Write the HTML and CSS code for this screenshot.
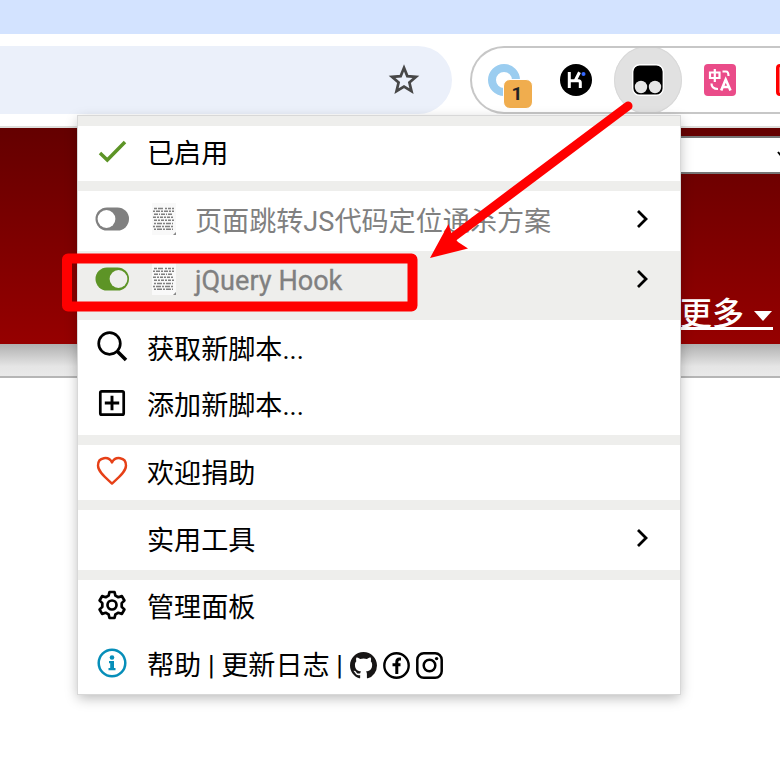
FILE: index.html
```
<!DOCTYPE html>
<html lang="zh-CN">
<head>
<meta charset="utf-8">
<title>脚本管理</title>
<link rel="stylesheet" href="styles.css">
</head>
<body>
<div class="tabs"></div>
<header class="toolbar">
  <div class="address">
    <svg width="32" height="32" viewBox="0 0 32 32"><path d="M16 3.800 19.300 12.100 28 12.800 21.400 18.500 23.500 27.100 16 22.500 8.500 27.100 10.600 18.500 4 12.800 12.700 12.100Z" fill="none" stroke="#474747" stroke-width="2.700"/></svg>
  </div>
  <div class="extensions">
    <div class="ext ext-ring"><span class="ring"></span><span class="badge">1</span></div>
    <div class="ext"><svg width="32" height="32" viewBox="0 0 32 32"><circle cx="16" cy="16" r="16"/><path d="M9.300 8v16M9.500 16.800h9q1.800 0 1.800 2V24M15.300 16.500 19.500 8.300" fill="none" stroke="#fff" stroke-width="3"/><circle cx="23.500" cy="10" r="2" fill="#3568ff"/></svg></div>
    <div class="ext ext-active"><svg width="32" height="32" viewBox="0 0 32 32"><rect x=".7" y=".7" width="30.600" height="30.600" rx="7" stroke="#fff" stroke-width="1.400"/><circle cx="9" cy="23" r="6.200" fill="#e6e6e6"/><circle cx="23" cy="23" r="6.200" fill="#e6e6e6"/></svg></div>
    <div class="ext"><svg width="32" height="32" viewBox="0 0 32 32"><rect width="32" height="32" rx="4" fill="#ea4c89"/><g fill="none" stroke="#fff" stroke-width="2.200"><path d="M6 8.500h9.500v5.500H6zM10.800 5v13M18.500 7.500h3.500q2.500 0 2.500 4.500M7.500 19.500q0 5.500 6.500 5.500"/><path d="M17.200 26.500 21.700 15.500 26.500 26.500M19 23h6" stroke-width="2.600"/></g></svg></div>
    <div class="ext"><span class="red-ext"></span></div>
  </div>
</header>
<main class="page">
  <div class="banner">
    <div class="select"><svg width="10" height="8" viewBox="0 0 10 8"><path d="M1 1l4 5 4-5" fill="none" stroke="#000" stroke-width="2"/></svg></div>
    <div class="more"><span class="more-text">更多</span><span class="caret"></span></div>
  </div>
  <div class="shade"></div>
</main>

<nav class="menu">
  <div class="row enabled">
    <span class="icon"><svg width="32" height="32" viewBox="0 0 32 32"><path d="M4 17 11.300 24 29 6" fill="none" stroke="#5d9426" stroke-width="3.500"/></svg></span>
    <span class="label">已启用</span>
  </div>
  <hr>
  <div class="row script">
    <span class="icon"><svg width="34" height="24" viewBox="0 0 34 24"><rect x=".5" y=".5" width="33.500" height="23" rx="11.500" fill="#808080"/><circle cx="11.500" cy="12" r="8.900" fill="#fff"/></svg></span>
    <svg class="sheet" width="24" height="32" viewBox="0 0 24 32"><path d="M0 0h24v32H0z" fill="#f9f9f9"/><g fill="none" stroke="#808080" stroke-width="1.500"><path d="M2 5.500h20" stroke-dasharray="3 1 5 2 2 1"/><path d="M1 8.300h21" stroke-dasharray="2 1 4 1"/><path d="M2 11.200h19" stroke-dasharray="4 1 1 1"/><path d="M1 14.200h21M2 17.300h20" stroke-dasharray="3 1 2 1"/><path d="M2 20.400h19M1 23.400h20M2 26.300h19" stroke-dasharray="2 1 5 1"/></g><path d="M24 29v3h-3z" fill="#888"/></svg>
    <span class="label">页面跳转JS代码定位通杀方案</span>
    <svg class="arrow" width="12" height="20" viewBox="0 0 12 20"><path d="M2 2l8 8-8 8" fill="none" stroke="#000" stroke-width="2.800"/></svg>
  </div>
  <div class="row script selected">
    <span class="icon"><svg width="34" height="24" viewBox="0 0 34 24"><rect x=".5" y=".5" width="33.500" height="23" rx="11.500" fill="#5d9426"/><circle cx="23.500" cy="12" r="8.900" fill="#eeeeec"/></svg></span>
    <svg class="sheet" width="24" height="32" viewBox="0 0 24 32"><path d="M0 0h24v32H0z" fill="#f9f9f9"/><g fill="none" stroke="#808080" stroke-width="1.500"><path d="M2 5.500h20" stroke-dasharray="3 1 5 2 2 1"/><path d="M1 8.300h21" stroke-dasharray="2 1 4 1"/><path d="M2 11.200h19" stroke-dasharray="4 1 1 1"/><path d="M1 14.200h21M2 17.300h20" stroke-dasharray="3 1 2 1"/><path d="M2 20.400h19M1 23.400h20M2 26.300h19" stroke-dasharray="2 1 5 1"/></g><path d="M24 29v3h-3z" fill="#888"/></svg>
    <span class="label">jQuery Hook</span>
    <svg class="arrow" width="12" height="20" viewBox="0 0 12 20"><path d="M2 2l8 8-8 8" fill="none" stroke="#000" stroke-width="2.800"/></svg>
  </div>
  <div class="row action">
    <span class="icon"><svg width="32" height="32" viewBox="0 0 32 32"><g fill="none" stroke="#000"><circle cx="13.500" cy="13.500" r="10.800" stroke-width="2.700"/><path d="M21 21l9 9" stroke-width="3.500"/></g></svg></span>
    <span class="label">获取新脚本...</span>
  </div>
  <div class="row action add">
    <span class="icon"><svg width="32" height="32" viewBox="0 0 32 32"><g fill="none" stroke="#000"><rect x="4.300" y="4.300" width="23.400" height="23.400" rx="1.500" stroke-width="2.700"/><path d="M16 8.800v14.400M8.800 16h14.400" stroke-width="2.900"/></g></svg></span>
    <span class="label">添加新脚本...</span>
  </div>
  <hr>
  <div class="row donate">
    <span class="icon"><svg width="32" height="32" viewBox="0 0 32 32"><path d="M16 28.500C10 23 2 17 2 10.500 2 1.500 13 1 16 7.500 19 1 30 1.500 30 10.500 30 17 22 23 16 28.500Z" fill="none" stroke="#e64017" stroke-width="2.400" stroke-linejoin="round"/></svg></span>
    <span class="label">欢迎捐助</span>
  </div>
  <hr>
  <div class="row tools">
    <span class="icon"></span>
    <span class="label">实用工具</span>
    <svg class="arrow" width="12" height="20" viewBox="0 0 12 20"><path d="M2 2l8 8-8 8" fill="none" stroke="#000" stroke-width="2.800"/></svg>
  </div>
  <hr>
  <div class="row settings">
    <span class="icon"><svg width="32" height="32" viewBox="0 0 32 32"><g fill="none" stroke="#000" stroke-width="2.700" stroke-linejoin="round"><path d="M13.500 3h5l.9 3.600 2.900 1.600 3.600-1.100 2.500 4.400-2.700 2.600v3.800l2.700 2.600-2.500 4.400-3.600-1.100-2.900 1.600-.9 3.600h-5l-.9-3.600-2.900-1.600-3.600 1.100-2.500-4.400 2.700-2.600v-3.800l-2.700-2.600 2.500-4.400 3.600 1.100 2.900-1.600z"/><circle cx="16" cy="16" r="4.500"/></g></svg></span>
    <span class="label">管理面板</span>
  </div>
  <div class="row help">
    <span class="icon"><svg width="32" height="32" viewBox="0 0 32 32"><circle cx="16" cy="16" r="13.300" fill="none" stroke="#068eb9" stroke-width="2.500"/><circle cx="16" cy="10.500" r="2.300" fill="#068eb9"/><path d="M13 14h5v7h1.500v2.200h-7V21h1.700v-4.800H13z" fill="#068eb9"/></svg></span>
    <span class="label">帮助 | 更新日志 |</span>
    <span class="social">
      <svg width="27" height="27" viewBox="0 0 16 16"><path fill="#171515" d="M8 0C3.580 0 0 3.580 0 8c0 3.540 2.290 6.530 5.470 7.590.4.070.55-.17.55-.38v-1.490c-2.010.37-2.530-.49-2.690-.94-.09-.23-.48-.94-.82-1.130-.28-.15-.68-.52-.01-.53.63-.01 1.080.58 1.230.82.72 1.210 1.870.87 2.330.66.07-.52.28-.87.51-1.070-1.780-.2-3.640-.89-3.640-3.950 0-.87.31-1.590.82-2.150-.08-.2-.36-1.020.08-2.120 0 0 .67-.21 2.200.82a7.400 7.400 0 0 1 4 0c1.530-1.040 2.200-.82 2.200-.82.44 1.100.16 1.920.08 2.120.51.56.82 1.270.82 2.150 0 3.070-1.870 3.750-3.650 3.950.29.25.54.73.54 1.480v2.200c0 .21.15.46.55.38A8 8 0 0 0 16 8c0-4.420-3.580-8-8-8Z"/></svg>
      <svg width="27" height="27" viewBox="0 0 27 27"><g fill="none" stroke="#000"><circle cx="13.500" cy="13.500" r="12.200" stroke-width="2.400"/><path d="M18 7h-1.500Q13.800 7 13.800 10v12M9.500 12.800h8" stroke-width="3"/></g></svg>
      <svg width="27" height="27" viewBox="0 0 27 27"><g fill="none" stroke="#000" stroke-width="2.500"><rect x="1.300" y="1.300" width="24.400" height="24.400" rx="6.500"/><circle cx="13.500" cy="13.500" r="5.800"/></g><circle cx="20.600" cy="6.600" r="1.700"/></svg>
    </span>
  </div>
</nav>

<svg class="annotation" width="780" height="782" viewBox="0 0 780 782">
  <rect x="67" y="258.500" width="345.500" height="48" rx="1" fill="none" stroke="#f00" stroke-width="10" stroke-linejoin="round"/>
  <path d="M628 106 452 238" stroke="#f00" stroke-width="9" stroke-linecap="round"/>
  <path d="M430 258 448.500 224 452 235 458 242 468 248.500Z" fill="#f00"/>
</svg>
</body>
</html>
```

FILE: styles.css
```
* { box-sizing: border-box; }
body {
  margin: 0;
  width: 780px;
  height: 782px;
  overflow: hidden;
  position: relative;
  background: #fff;
  color: #000;
  font: 27px/32px Roboto, "Noto Sans CJK SC", sans-serif;
}
svg { display: block; flex: none; }
.tabs { height: 34px; background: #d3e3ff; }
.toolbar {
  display: flex;
  gap: 18px;
  height: 94px;
  padding-top: 12px;
  border-bottom: 2px solid #dededc;
}
.address {
  flex: none;
  display: flex;
  align-items: center;
  justify-content: flex-end;
  width: 452px;
  height: 68px;
  padding-right: 32px;
  border-radius: 0 34px 34px 0;
  background: #ebf0fa;
}
.extensions {
  flex: none;
  display: flex;
  gap: 4px;
  width: 310px;
  height: 68px;
  overflow: hidden;
  border: 2px solid #c7c7c7;
  border-right: 0;
  border-radius: 34px 0 0 34px;
}
.ext {
  flex: none;
  display: flex;
  align-items: center;
  justify-content: center;
  width: 68px;
  height: 68px;
  margin-top: -2px;
}
.ext-ring { position: relative; margin-left: -2px; }
.ring { width: 32px; height: 32px; border: 8px solid #9bcdf0; border-radius: 50%; }
.badge {
  position: absolute;
  left: 33px;
  top: 33px;
  width: 30px;
  height: 30px;
  border: 1px solid #fff;
  border-radius: 7px;
  background: #f0ad4e;
  color: #202124;
  font: bold 19px/28px Roboto, sans-serif;
  text-align: center;
  padding-right: 2px;
}
.ext-active { border-radius: 50%; background: #e1e1e1; box-shadow: inset 0 0 0 1px #d8d8d8; }
.red-ext { width: 32px; height: 32px; border: 3px solid #f00; border-radius: 4px; background: #ff7777; }
.banner {
  display: flex;
  flex-direction: column;
  align-items: flex-end;
  justify-content: space-between;
  height: 216px;
  padding: 8px 0 14px;
  background: linear-gradient(#640000, #960000);
}
.select {
  display: flex;
  align-items: center;
  justify-content: flex-end;
  width: 173px;
  height: 38px;
  overflow: hidden;
  border: solid #767676;
  border-width: 2px 0;
  background: #fff;
}
.select svg { margin-right: -7px; }
.more {
  display: flex;
  align-items: center;
  gap: 10px;
  height: 32px;
  margin-right: 7px;
  padding-right: 1px;
  border-bottom: 3px solid #fff;
  color: #fff;
  font-size: 32px;
}
.more-text { padding-top: 3px; font-weight: 500; }
.caret { margin-top: 7px; border: solid transparent; border-width: 10px 9px 0; border-top-color: #fff; }
.shade { height: 34px; border-bottom: 2px solid #b5b5b5; background: linear-gradient(#b0b0b0, #e5e5e5 70%, #e9e9e9); }

.menu {
  position: absolute;
  left: 78px;
  top: 116px;
  width: 602px;
  height: 578px;
  background: #fff;
  border-top: 10px solid #eeeeec;
  box-shadow: 0 0 0 1px #d8d8d8, 0 4px 12px rgba(0, 0, 0, .28);
}
.menu hr { height: 10px; margin: 0; border: 0; background: #eeeeec; }
.row { display: flex; align-items: center; height: 60px; padding-left: 17px; }
.icon { flex: none; display: flex; align-items: center; justify-content: center; width: 34px; height: 32px; margin-right: 18px; }
.label { padding-top: 6px; font-size: 27.100px; white-space: pre; }
.arrow { margin: 0 32px 0 auto; }
.enabled { height: 55px; padding-bottom: 3px; }
.enabled .label { padding-top: 4px; }
.script { padding-bottom: 4px; color: #808080; }
.script .icon { margin-right: 23px; }
.sheet { margin-right: 19px; }
.script .label { padding-top: 6px; }
.selected { height: 69px; padding-bottom: 13px; background: #eeeeec; }
.selected .label { padding-top: 3px; -webkit-text-stroke: .3px #808080; }
.action { height: 58px; padding-bottom: 6px; }
.add { height: 57px; padding-bottom: 8px; }
.action .label, .settings .label, .help .label { padding-top: 7px; }
.donate { height: 55px; padding-bottom: 3px; }
.tools { padding-bottom: 4px; }
.settings { height: 57px; padding-bottom: 8px; }
.help { height: 57px; padding-bottom: 6px; }
.social { display: flex; gap: 6px; margin-left: 7px; padding-top: 5px; }
.annotation { position: absolute; left: 0; top: 0; }
```
